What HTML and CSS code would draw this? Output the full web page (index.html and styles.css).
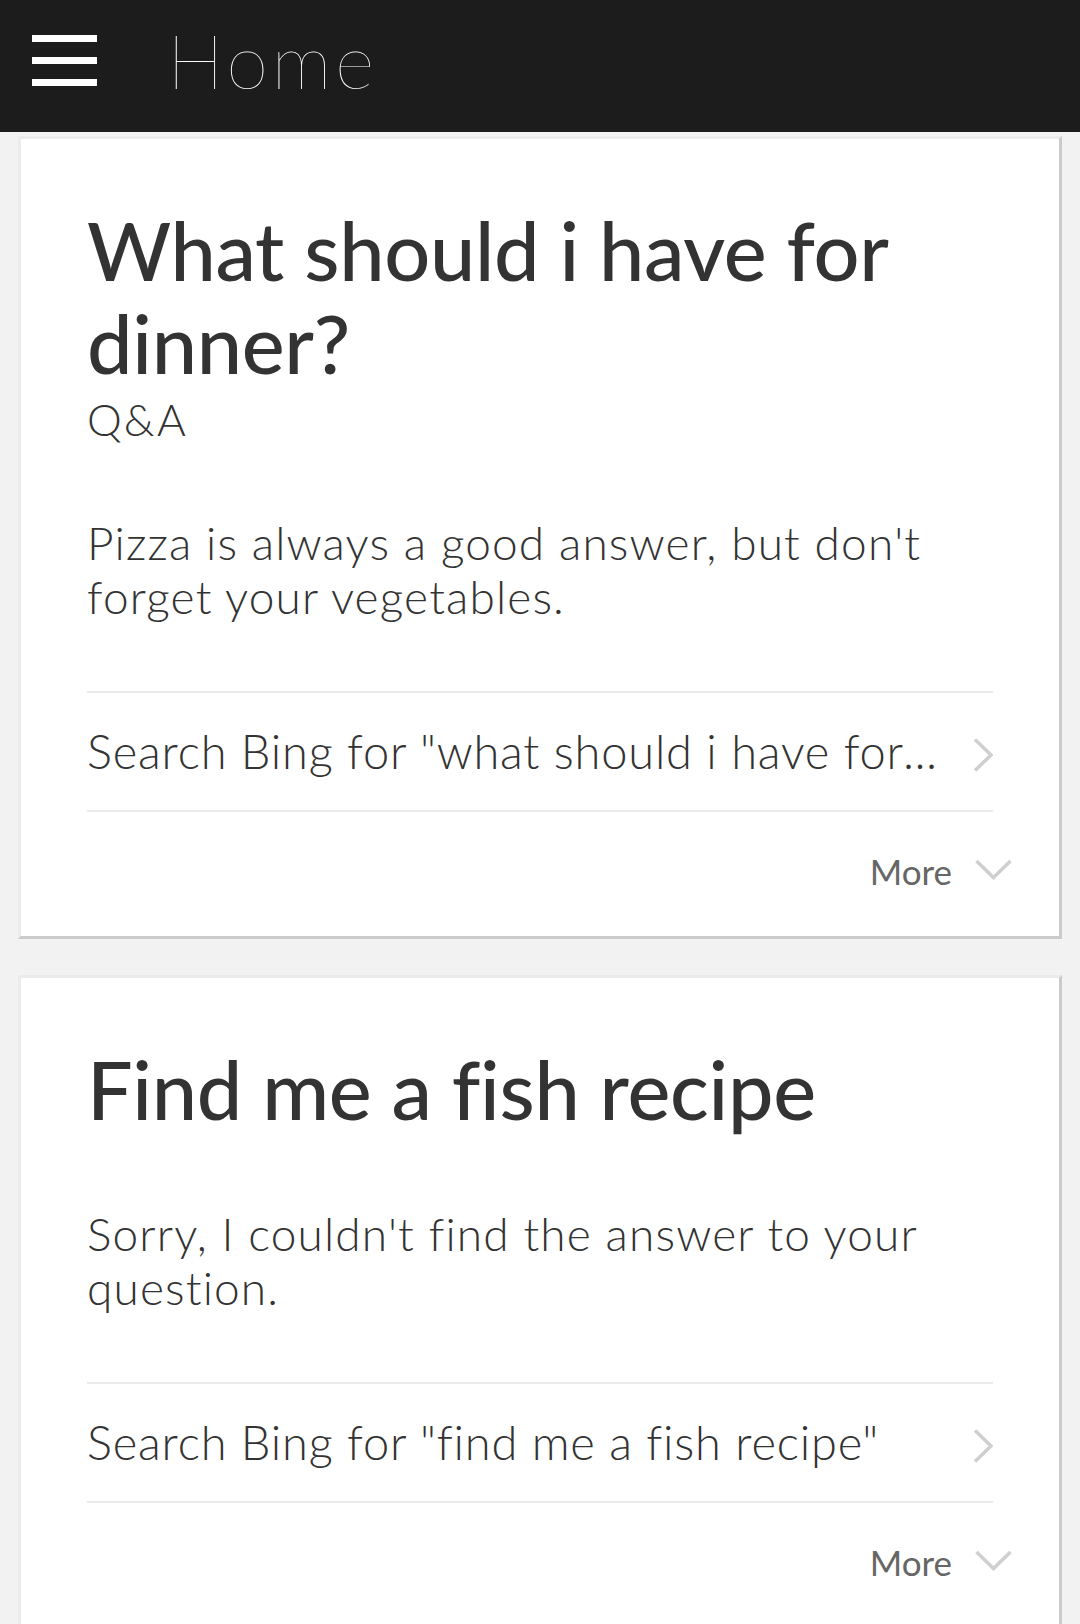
FILE: index.html
```html
<!DOCTYPE html>
<html lang="en">
<head>
<meta charset="utf-8">
<title>Home</title>
<link rel="stylesheet" href="styles.css">
</head>
<body>
<header class="topbar">
  <button class="menu-btn" aria-label="Menu">
    <span class="menu-bar"></span>
    <span class="menu-bar"></span>
    <span class="menu-bar"></span>
  </button>
  <h1 class="topbar-title">Home</h1>
</header>

<main class="feed">
  <article class="card">
    <h2 class="card-title">What should i have for dinner?</h2>
    <div class="card-sub">Q&amp;A</div>
    <p class="card-body">Pizza is always a good answer, but don't forget your vegetables.</p>
    <a class="bing-row" href="#">
      <span class="bing-text">Search Bing for "what should i have for dinner?"</span>
      <svg class="chev-right" width="20" height="34" viewBox="0 0 20 34"><polyline points="2,1.5 18,17 2,32.5" fill="none" stroke="#cfcfcf" stroke-width="3.5"/></svg>
    </a>
    <div class="more-row">
      <span class="more-text">More</span>
      <svg class="chev-down" width="37" height="21" viewBox="0 0 37 21"><polyline points="1.5,2 18.5,18.5 35.5,2" fill="none" stroke="#cfcfcf" stroke-width="3.5"/></svg>
    </div>
  </article>

  <article class="card">
    <h2 class="card-title">Find me a fish recipe</h2>
    <p class="card-body">Sorry, I couldn't find the answer to your question.</p>
    <a class="bing-row" href="#">
      <span class="bing-text">Search Bing for "find me a fish recipe"</span>
      <svg class="chev-right" width="20" height="34" viewBox="0 0 20 34"><polyline points="2,1.5 18,17 2,32.5" fill="none" stroke="#cfcfcf" stroke-width="3.5"/></svg>
    </a>
    <div class="more-row">
      <span class="more-text">More</span>
      <svg class="chev-down" width="37" height="21" viewBox="0 0 37 21"><polyline points="1.5,2 18.5,18.5 35.5,2" fill="none" stroke="#cfcfcf" stroke-width="3.5"/></svg>
    </div>
  </article>
</main>
</body>
</html>
```

FILE: styles.css
```css
* {
  box-sizing: border-box;
}

html, body {
  margin: 0;
  padding: 0;
}

body {
  background: #f2f2f2;
  font-family: Lato, "Open Sans", "Liberation Sans", sans-serif;
  font-variant-ligatures: none;
  font-feature-settings: "liga" 0, "clig" 0;
  color: #333333;
  width: 1080px;
  overflow: hidden;
}

.topbar {
  height: 132px;
  background: #1c1c1c;
  display: flex;
  align-items: center;
  padding: 0 0 12px 32px;
}

.menu-btn {
  display: flex;
  flex-direction: column;
  gap: 15px;
  padding: 0;
  margin: 0;
  border: 0;
  background: none;
  width: 65px;
}

.menu-bar {
  display: block;
  width: 65px;
  height: 7px;
  background: #ffffff;
}

.topbar-title {
  margin: 0 0 0 70px;
  font-family: Lato, sans-serif;
  font-weight: 100;
  font-size: 76px;
  line-height: 80px;
  letter-spacing: 3.5px;
  color: #ffffff;
}

.feed {
  display: flex;
  flex-direction: column;
  gap: 36px;
  padding: 4px 18px 0 18px;
}

.card {
  background: #ffffff;
  border-style: solid;
  border-width: 3px;
  border-color: #ebebeb #cbcbcb #cbcbcb #ebebeb;
  padding: 64px 66px 0 66px;
}

.card-title {
  margin: 0;
  font-size: 81px;
  line-height: 93px;
  font-weight: 500;
  letter-spacing: -0.3px;
  color: #333333;
}

.card-sub {
  margin-top: 5px;
  font-size: 44px;
  line-height: 50px;
  font-weight: 300;
  letter-spacing: 2px;
  color: #333333;
}

.card-body {
  margin: 72px 0 0 0;
  font-size: 46px;
  line-height: 54px;
  font-weight: 300;
  letter-spacing: 1.15px;
  color: #333333;
}

.bing-row {
  margin-top: 67px;
  display: flex;
  align-items: center;
  height: 121px;
  border-top: 2px solid #ebebeb;
  border-bottom: 2px solid #ebebeb;
  text-decoration: none;
  color: #333333;
}

.bing-text {
  flex: 1;
  min-width: 0;
  font-size: 47px;
  line-height: 117px;
  font-weight: 300;
  letter-spacing: 0.8px;
  white-space: nowrap;
  overflow: hidden;
  text-overflow: ellipsis;
  padding-right: 30px;
}

.chev-right {
  flex: none;
  display: block;
  margin-top: 6px;
}

.more-row {
  display: flex;
  justify-content: flex-end;
  align-items: flex-start;
  gap: 23px;
  margin-right: -19px;
  padding: 39px 0 45px 0;
}

.more-text {
  font-size: 35px;
  line-height: 40px;
  font-weight: 400;
  color: #666666;
}

.chev-down {
  flex: none;
  display: block;
  margin-top: 8px;
}
```
